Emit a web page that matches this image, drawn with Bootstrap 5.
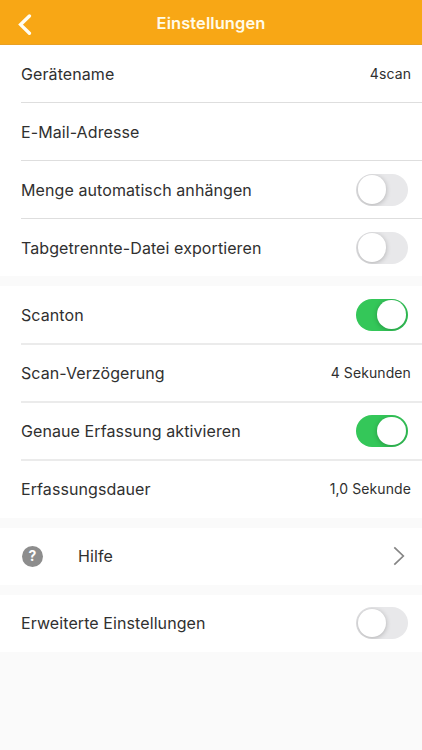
<!DOCTYPE html>
<html lang="de">
<head>
<meta charset="utf-8">
<meta name="viewport" content="width=device-width, initial-scale=1">
<title>Einstellungen</title>
<link href="https://cdn.jsdelivr.net/npm/bootstrap@5.3.0/dist/css/bootstrap.min.css" rel="stylesheet">
<style>
body { font-family: Inter, "Liberation Sans", sans-serif; background: #fafafa; color: #303030; min-height: 750px; overflow: hidden; }
.topbar { height: 45px; background: #f8a715; border-bottom: 1px solid #e9a024; }
.topbar h1 { font-size: 16.5px; font-weight: 600; color: #fffbe9; line-height: 20px; letter-spacing: .07px; padding-top: 2px; }
.side { width: 48px; }
.settings { gap: 10px; }
.group { padding-left: 21px; }
.setting { height: 58px; padding-right: 11px; font-size: 16px; letter-spacing: .09px; border-bottom: 1px solid #dedede; }
.group-bold .setting { border-bottom: 2px solid #ebebeb; }
.group-bold .setting:first-child { height: 59px; }
.group .setting:last-child { height: 57px; border-bottom: 0; }
.group-single .setting, .group-bold .setting:last-child { padding-bottom: 1px; }
.val { font-size: 14px; line-height: 22px; letter-spacing: .1px; }
.group-bold .val { padding-bottom: 1px; }
.toggle.form-check-input { width: 52px; height: 32px; margin: 0 3.5px 0 0; padding: 2px; border: 0; border-radius: 16px; background: #e8e8ea; display: flex; align-items: center; overflow: hidden; }
.toggle::before { content: ""; width: 28.5px; height: 28.5px; border-radius: 50%; background: #fff; box-shadow: 0 1px 5px rgba(0,0,0,.25); }
.toggle.form-check-input:checked { background: #34c759; justify-content: flex-end; }
.help-icon { width: 21px; height: 21px; margin-left: 1px; margin-right: 35px; border-radius: 50%; background: #8d8d8d; color: #fff; font-size: 14px; font-weight: 700; letter-spacing: 0; line-height: 1; }
.chevron { margin-right: 6px; }
</style>
<script src="https://cdn.jsdelivr.net/npm/bootstrap@5.3.0/dist/js/bootstrap.bundle.min.js"></script>
</head>
<body>
<header class="topbar d-flex align-items-center justify-content-between">
  <a href="#" class="side d-flex ps-3 pt-1" aria-label="Zurück"><svg width="18" height="22" viewBox="0 0 18 22" fill="none" stroke="#fffdf2" stroke-width="3.4"><path d="M13.4 3 4.6 11.6l8.8 8.6" stroke-linecap="round"/></svg></a>
  <h1 class="mb-0">Einstellungen</h1>
  <span class="side"></span>
</header>
<main class="settings d-flex flex-column">
  <section class="group bg-white">
    <div class="setting d-flex align-items-center justify-content-between"><span>Gerätename</span><span class="val">4scan</span></div>
    <div class="setting d-flex align-items-center justify-content-between"><span>E-Mail-Adresse</span></div>
    <div class="setting d-flex align-items-center justify-content-between"><label for="menge">Menge automatisch anhängen</label><input class="form-check-input toggle" type="checkbox" role="switch" id="menge"></div>
    <div class="setting d-flex align-items-center justify-content-between"><label for="tab">Tabgetrennte-Datei exportieren</label><input class="form-check-input toggle" type="checkbox" role="switch" id="tab"></div>
  </section>
  <section class="group group-bold bg-white">
    <div class="setting d-flex align-items-center justify-content-between"><label for="ton">Scanton</label><input class="form-check-input toggle" type="checkbox" role="switch" id="ton" checked></div>
    <div class="setting d-flex align-items-center justify-content-between"><span>Scan-Verzögerung</span><span class="val">4 Sekunden</span></div>
    <div class="setting d-flex align-items-center justify-content-between"><label for="genau">Genaue Erfassung aktivieren</label><input class="form-check-input toggle" type="checkbox" role="switch" id="genau" checked></div>
    <div class="setting d-flex align-items-center justify-content-between"><span>Erfassungsdauer</span><span class="val">1,0 Sekunde</span></div>
  </section>
  <section class="group group-single bg-white">
    <div class="setting d-flex align-items-center"><span class="help-icon d-flex align-items-center justify-content-center">?</span><span>Hilfe</span><svg class="chevron ms-auto" width="12" height="20" viewBox="0 0 12 20" fill="none" stroke="#858585" stroke-width="1.7"><path d="M1.3 1.4 10.3 10l-9 8.6"/></svg></div>
  </section>
  <section class="group group-single bg-white">
    <div class="setting d-flex align-items-center justify-content-between"><label for="erw">Erweiterte Einstellungen</label><input class="form-check-input toggle" type="checkbox" role="switch" id="erw"></div>
  </section>
</main>
</body>
</html>
